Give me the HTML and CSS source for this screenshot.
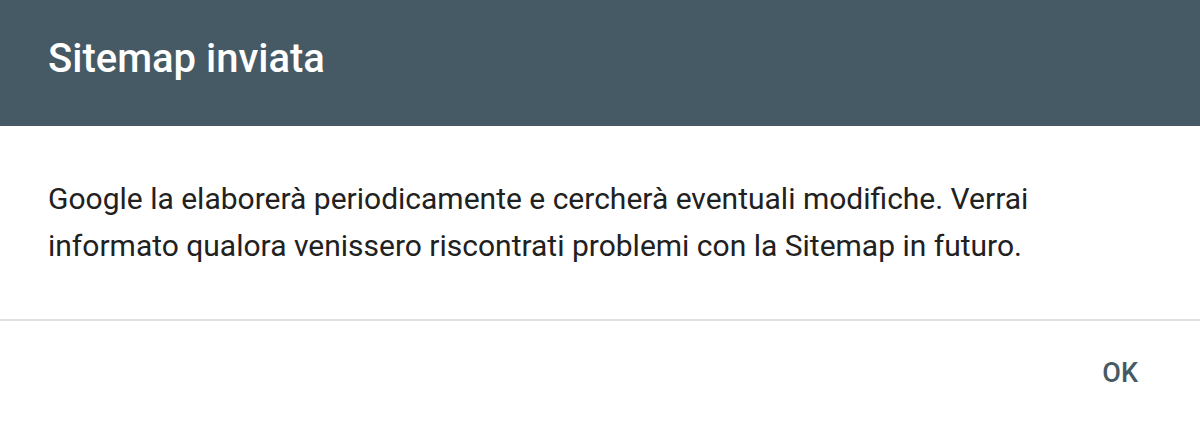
FILE: index.html
```html
<!DOCTYPE html>
<html lang="it">
  <head>
    <meta charset="UTF-8" />
    <meta name="viewport" content="width=device-width, initial-scale=1.0" />
    <title>Sitemap inviata</title>
    <link rel="stylesheet" href="styles.css">
  </head>
  <body>
    <div class="dialog">
      <div class="dialog-header">
        <h2 class="dialog-title">Sitemap inviata</h2>
      </div>
      <div class="dialog-body">
        <p>Google la elaborerà periodicamente e cercherà eventuali modifiche. Verrai informato qualora venissero riscontrati problemi con la Sitemap in futuro.</p>
      </div>
      <div class="dialog-actions">
        <button class="btn-ok">OK</button>
      </div>
    </div>
  </body>
</html>
```

FILE: styles.css
```css
* {
  margin: 0;
  padding: 0;
  box-sizing: border-box;
}

body {
  font-family: Roboto, 'Liberation Sans', sans-serif;
  background-color: #ffffff;
  color: #202124;
}

.dialog {
  width: 1200px;
  height: 424px;
  display: flex;
  flex-direction: column;
}

.dialog-header {
  height: 126px;
  background-color: #455a64;
  display: flex;
  align-items: center;
  padding: 0 48px 8px;
}

.dialog-title {
  color: #ffffff;
  font-size: 40px;
  font-weight: 500;
  line-height: 48px;
}

.dialog-body {
  padding: 49px 48px 50px;
  border-bottom: 2px solid #e0e0e0;
}

.dialog-body p {
  font-size: 30px;
  line-height: 47px;
  color: #212121;
}

.dialog-actions {
  flex: 1;
  display: flex;
  justify-content: flex-end;
  align-items: center;
  padding: 0 46px;
}

.btn-ok {
  font-family: Roboto, 'Liberation Sans', sans-serif;
  font-size: 27px;
  font-weight: 500;
  color: #455a64;
  background: none;
  border: none;
  padding: 8px 16px;
  cursor: pointer;
}
```
